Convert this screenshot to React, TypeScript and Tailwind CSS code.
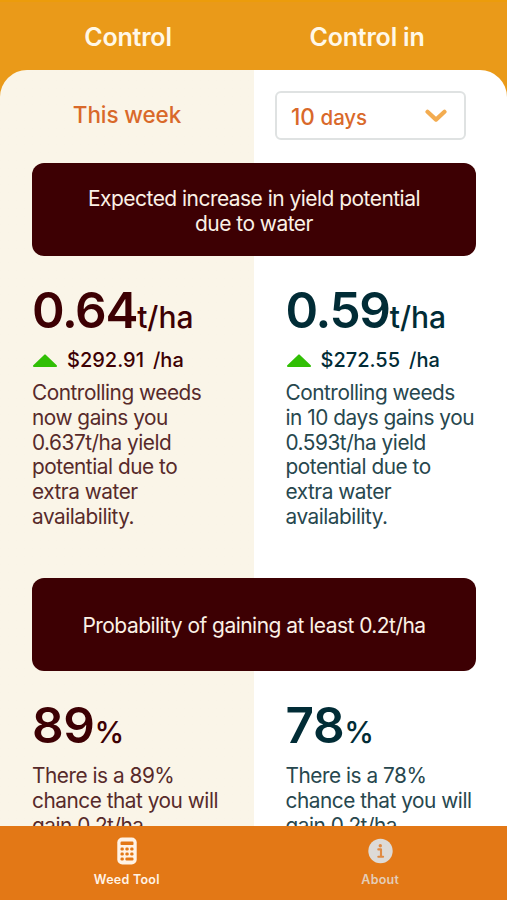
import React from 'react';

interface Result {
  value: string;
  unit: string;
  price?: string;
  lines: string[];
}

interface ResultColumnProps {
  result: Result;
  tone: 'maroon' | 'teal';
}

const yieldNow: Result = {
  value: '0.64',
  unit: 't/ha',
  price: '$292.91',
  lines: ['Controlling weeds', 'now gains you', '0.637t/ha yield', 'potential due to', 'extra water', 'availability.'],
};

const yieldLater: Result = {
  value: '0.59',
  unit: 't/ha',
  price: '$272.55',
  lines: ['Controlling weeds', 'in 10 days gains you', '0.593t/ha yield', 'potential due to', 'extra water', 'availability.'],
};

const chanceNow: Result = {
  value: '89',
  unit: '%',
  lines: ['There is a 89%', 'chance that you will', 'gain 0.2t/ha'],
};

const chanceLater: Result = {
  value: '78',
  unit: '%',
  lines: ['There is a 78%', 'chance that you will', 'gain 0.2t/ha'],
};

function CalculatorIcon() {
  return (
    <svg width="20" height="28" viewBox="0 0 20 28">
      <rect x="0.3" y="0.5" width="19.4" height="27" rx="5" fill="#fff3e6" />
      <rect x="3.5" y="4.5" width="13" height="3.6" rx="1.2" fill="#e37816" />
      <g fill="#e37816">
        <rect x="3.5" y="10.6" width="3.3" height="2.8" rx="1.2" />
        <rect x="8.4" y="10.6" width="3.3" height="2.8" rx="1.2" />
        <rect x="13.2" y="10.6" width="3.3" height="2.8" rx="1.2" />
        <rect x="3.5" y="15.6" width="3.3" height="2.8" rx="1.2" />
        <rect x="8.4" y="15.6" width="3.3" height="2.8" rx="1.2" />
        <rect x="13.2" y="15.6" width="3.3" height="2.8" rx="1.2" />
        <rect x="3.5" y="20.6" width="3.3" height="2.8" rx="1.2" />
        <rect x="8.4" y="20.6" width="8.1" height="2.8" rx="1.2" />
      </g>
    </svg>
  );
}

function InfoIcon() {
  return (
    <svg width="26" height="28" viewBox="0 0 26 28">
      <circle cx="13.5" cy="14" r="12.2" fill="#dddad7" />
      <circle cx="13.3" cy="8.8" r="1.7" fill="#e08a43" />
      <path d="M11.3 12.4H14v7.2M11.3 19.7h4.8" fill="none" stroke="#e08a43" strokeWidth="2.1" strokeLinecap="round" strokeLinejoin="round" />
    </svg>
  );
}

function Banner({ children }: { children: React.ReactNode }) {
  return (
    <div className="mr-[31px] ml-8 flex h-[93px] items-center justify-center rounded-xl bg-[#3d0003] pt-0.5 text-center text-[21px] leading-[25px] tracking-[-0.54px] text-[#fbf1e6]">
      <p>{children}</p>
    </div>
  );
}

function ResultColumn({ result, tone }: ResultColumnProps) {
  const strong = tone === 'maroon' ? 'text-[#3d0003]' : 'text-[#012c36]';
  const soft = tone === 'maroon' ? 'text-[#572a2a]' : 'text-[#27474e]';
  const valueSpacing = result.price ? 'tracking-[-1.3px]' : 'tracking-[-0.4px]';

  return (
    <div className="w-1/2 pl-8">
      <div className={`flex h-[60px] items-baseline font-semibold ${strong}`}>
        <span className={`text-[49.5px] leading-[61px] ${valueSpacing}`}>{result.value}</span>
        <span className="text-[30px] font-medium">{result.unit}</span>
      </div>
      {result.price && (
        <div className="mt-2 flex h-6 items-center">
          <svg width="26" height="15" viewBox="0 0 26 15">
            <path d="M2 13 13 2.4 24 13z" fill="#31bf05" stroke="#31bf05" strokeWidth="2" strokeLinejoin="round" />
          </svg>
          <span className={`ml-[9px] text-[20px] leading-6 font-medium ${strong}`}>
            {result.price}
            <span className="ml-[9px]">/ha</span>
          </span>
        </div>
      )}
      <p className={`${result.price ? 'mt-[9px]' : 'mt-[9px]'} text-[20.8px] leading-[24.8px] tracking-[-0.47px] whitespace-nowrap ${soft}`}>
        {result.lines.map((line) => (
          <span key={line} className="block">{line}</span>
        ))}
      </p>
    </div>
  );
}

export default function App() {
  return (
    <div className="flex h-[900px] w-[507px] flex-col overflow-hidden bg-[#ea9a19] font-['Inter',sans-serif]">
      {/* Header */}
      <header className="flex h-[70px] shrink-0 border-t-2 border-[#ec9c0c] text-center text-[25px] leading-[70px] font-semibold tracking-[-0.2px] text-[#fff8e8]">
        <h1 className="w-[256px]">Control</h1>
        <h1 className="w-[222px]">Control in</h1>
      </header>

      {/* Comparison */}
      <main className="min-h-0 flex-1 overflow-hidden rounded-t-[27px] bg-linear-to-r from-[#faf5e8] from-[254px] to-white to-[254px]">
        <div className="flex h-[93px] items-start pt-[21px] text-[22.5px] font-medium text-[#d9692a]">
          <div className="w-[254px] text-center leading-[47px] tracking-[-0.1px]">This week</div>
          <button className="ml-[21px] flex h-[49px] w-[191px] items-center justify-between rounded-md border-2 border-[#dfe2e2] bg-white pt-0.5 pr-[17px] pl-[14px] tracking-[-0.1px]">
            <span>10 <span className="text-[20.5px]">days</span></span>
            <svg className="mb-0.5" width="22" height="14" viewBox="0 0 22 14">
              <path d="M2.5 2.8 11 10.6 19.5 2.8" fill="none" stroke="#f3ac50" strokeWidth="4.2" strokeLinecap="round" strokeLinejoin="round" />
            </svg>
          </button>
        </div>

        <Banner>
          Expected increase in yield potential
          <br />
          due to water
        </Banner>
        <div className="flex h-[322px] pt-6">
          <ResultColumn result={yieldNow} tone="maroon" />
          <ResultColumn result={yieldLater} tone="teal" />
        </div>

        <Banner>Probability of gaining at least 0.2t/ha</Banner>
        <div className="flex pt-6">
          <ResultColumn result={chanceNow} tone="maroon" />
          <ResultColumn result={chanceLater} tone="teal" />
        </div>
      </main>

      {/* Tab bar */}
      <nav className="flex h-[74px] shrink-0 bg-[#e37816] text-[12.5px] leading-4 font-semibold tracking-[0.25px]">
        <button className="flex w-1/2 flex-col items-center pt-[11px] text-[#fff3e6]">
          <CalculatorIcon />
          <span className="mt-[7px]">Weed Tool</span>
        </button>
        <button className="flex w-1/2 flex-col items-center pt-[11px] text-[#e4cdb8]">
          <InfoIcon />
          <span className="mt-[7px]">About</span>
        </button>
      </nav>
    </div>
  );
}
